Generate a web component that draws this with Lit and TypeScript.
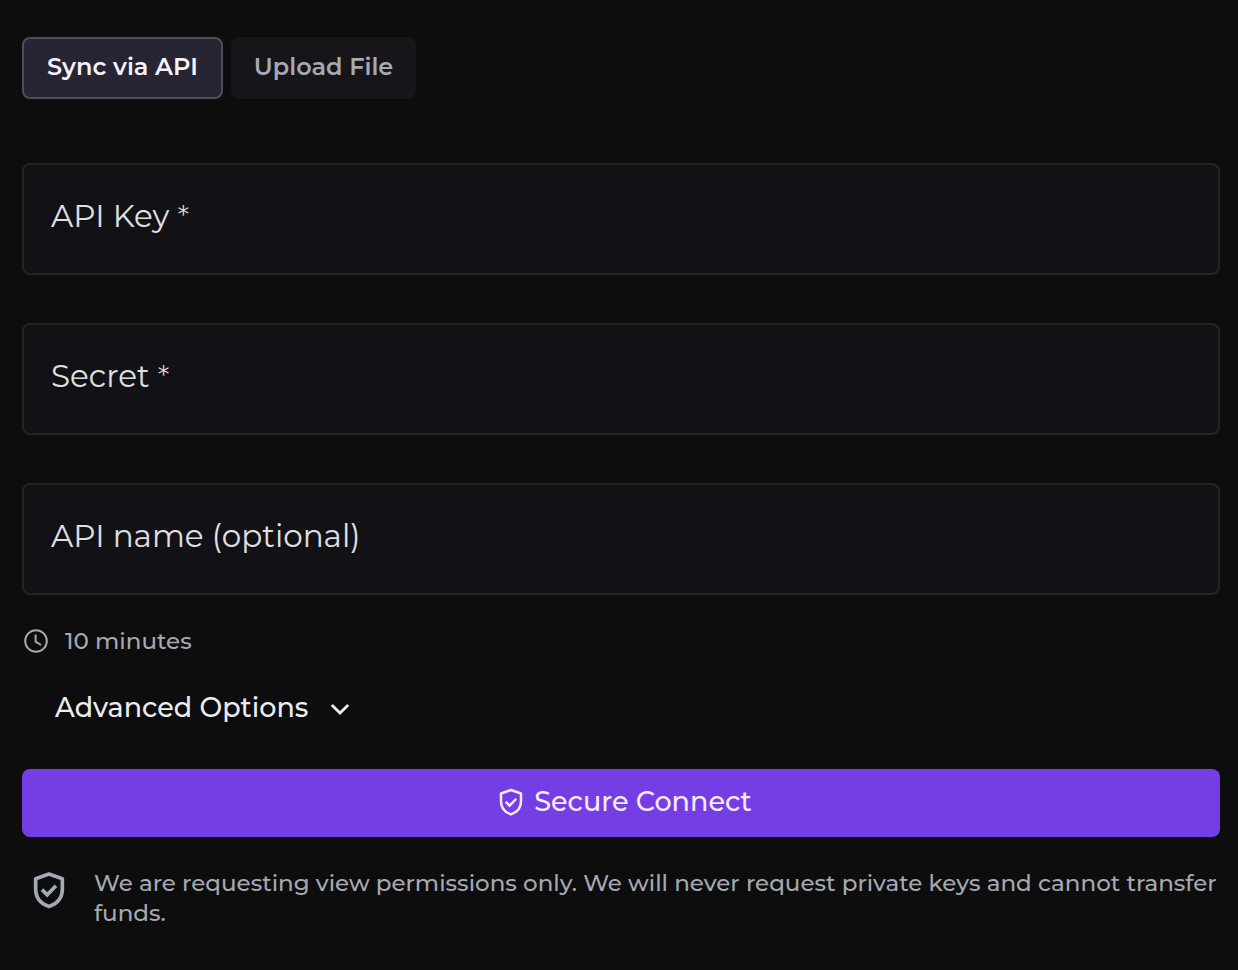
import { LitElement, html, css, svg } from "lit";
import { customElement, property, state } from "lit/decorators.js";

const shield = (stroke: number) => svg`
  <path d="M12 2.4 20 5.2V11.4C20 16.4 17 20.2 12 21.9 7 20.2 4 16.4 4 11.4V5.2Z"
    fill="none" stroke="currentColor" stroke-width=${stroke} stroke-linejoin="round" />
  <path d="M7.8 11.8 10.9 14.9 16.2 9.4" fill="none" stroke="currentColor" stroke-width=${stroke} />`;

@customElement("text-field")
export class TextField extends LitElement {
  @property() label = "";
  @property() type = "text";
  @property({ type: Boolean }) required = false;

  static styles = css`
    :host {
      display: block;
    }
    .field {
      display: grid;
      border: 2px solid #232328;
      border-radius: 8px;
      background: #121216;
    }
    .field:focus-within {
      border-color: #743ee4;
    }
    .label,
    .input {
      grid-area: 1 / 1;
      font-family: Metropolis, Montserrat, Inter, sans-serif;
      font-weight: 400;
      color: #e0e0e4;
    }
    .label {
      padding: 31px 27px 37px;
      font-size: 31px;
      line-height: 40px;
      pointer-events: none;
      z-index: 1;
    }
    .mark {
      font-weight: 300;
      line-height: 1;
    }
    .input {
      box-sizing: border-box;
      width: 100%;
      min-width: 0;
      margin: 0;
      padding: 40px 27px 12px;
      border: 0;
      outline: 0;
      background: transparent;
      font-size: 27px;
    }
    .field:focus-within .label,
    .field:has(.input:not(:placeholder-shown)) .label {
      padding-top: 8px;
      padding-bottom: 76px;
      font-size: 20px;
      line-height: 24px;
    }
  `;

  render() {
    return html`<div class="field">
      <label class="label" for="input"
        >${this.label}${this.required ? html` <span class="mark">*</span>` : ""}</label
      >
      <input class="input" id="input" type=${this.type} placeholder=" " ?required=${this.required} />
    </div>`;
  }
}

@customElement("app-root")
export class AppRoot extends LitElement {
  @state() private tab = 0;

  static styles = css`
    :host {
      display: block;
      box-sizing: border-box;
      min-height: 100vh;
      padding: 37px 18px 40px 22px;
      background: #0d0d0e;
      color: #a5a9b2;
      font-family: Metropolis, Montserrat, Inter, sans-serif;
      font-size: 23px;
      font-weight: 500;
      line-height: 30px;
    }
    button {
      margin: 0;
      font-family: inherit;
      font-weight: 500;
      cursor: pointer;
    }
    .icon {
      display: block;
      flex: none;
    }
    .tabs {
      display: flex;
      gap: 8px;
    }
    .tab {
      padding: 16px 23px 18px;
      border: 0;
      border-radius: 8px;
      background: #15151a;
      color: #a5a9b2;
      font-size: 24px;
      font-weight: 600;
      line-height: 28px;
    }
    .tab.active {
      padding: 14px 23px 16px;
      border: 2px solid #4f4e55;
      background: #272433;
      color: #f4f2fa;
    }
    .form {
      display: flex;
      flex-direction: column;
      gap: 48px;
      margin-top: 64px;
    }
    .time {
      display: flex;
      align-items: center;
      gap: 16px;
      margin-top: 31px;
      padding-left: 1px;
    }
    .advanced {
      display: flex;
      align-items: center;
      gap: 17px;
      margin-top: 32px;
      padding: 2px 33px;
      border: 0;
      background: none;
      color: #ececf0;
      font-size: 27px;
      line-height: 36px;
    }
    .connect {
      display: flex;
      align-items: center;
      justify-content: center;
      gap: 8px;
      width: 100%;
      margin-top: 41px;
      padding: 15px 16px 17px 22px;
      border: 0;
      border-radius: 8px;
      background: #743ee4;
      color: #f8e9ff;
      font-size: 27px;
      line-height: 36px;
    }
    .note {
      display: flex;
      gap: 25px;
      margin-top: 31px;
      padding-left: 7px;
    }
    .note .icon {
      margin-top: 2px;
    }
    .text {
      margin: 0;
    }
  `;

  render() {
    return html`
      <div class="tabs" role="tablist">
        ${["Sync via API", "Upload File"].map(
          (name, i) => html`<button
            class="tab ${this.tab === i ? "active" : ""}"
            role="tab"
            aria-selected=${this.tab === i}
            @click=${() => (this.tab = i)}
          >${name}</button>`,
        )}
      </div>
      <form class="form">
        <text-field label="API Key" required></text-field>
        <text-field label="Secret" type="password" required></text-field>
        <text-field label="API name (optional)"></text-field>
      </form>
      <div class="time">
        <svg class="icon" width="26" height="26" viewBox="0 0 26 26" fill="none" stroke="currentColor" stroke-width="2">
          <circle cx="13" cy="13" r="10.8" />
          <path d="M12.6 6.6V13.6L18 17" />
        </svg>
        <span>10 minutes</span>
      </div>
      <button class="advanced">
        <span>Advanced Options</span>
        <svg class="icon" width="30" height="30" viewBox="0 0 30 30" fill="none" stroke="currentColor" stroke-width="2.8">
          <path d="M6.8 12 15 20 23.2 12" />
        </svg>
      </button>
      <button class="connect">
        <svg class="icon" width="30" height="30" viewBox="0 0 24 24">${shield(2)}</svg>
        <span>Secure Connect</span>
      </button>
      <div class="note">
        <svg class="icon" width="40" height="40" viewBox="0 0 24 24">${shield(2.2)}</svg>
        <p class="text">
          We are requesting view permissions only. We will never request private keys and cannot transfer funds.
        </p>
      </div>
    `;
  }
}
